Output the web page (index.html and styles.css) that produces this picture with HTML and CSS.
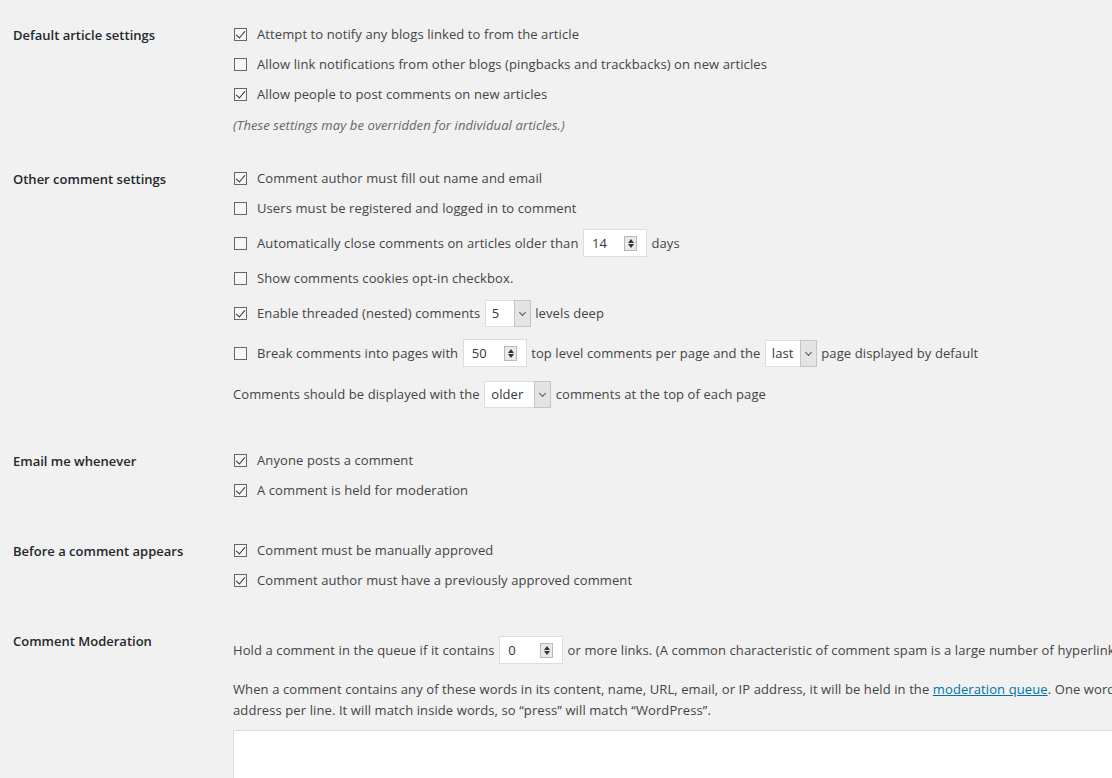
FILE: index.html
```html
<!DOCTYPE html>
<html lang="en">
<head>
  <meta charset="UTF-8">
  <title>Discussion Settings</title>
  <link rel="stylesheet" href="styles.css">
</head>
<body>
  <div class="wrap">
    <!-- Default article settings -->
    <div class="section">
      <div class="th">Default article settings</div>
      <div class="td">
        <div class="row"><span class="cb checked"></span>Attempt to notify any blogs linked to from the article</div>
        <div class="row"><span class="cb"></span>Allow link notifications from other blogs (pingbacks and trackbacks) on new articles</div>
        <div class="row"><span class="cb checked"></span>Allow people to post comments on new articles</div>
        <p class="description">(These settings may be overridden for individual articles.)</p>
      </div>
    </div>

    <!-- Other comment settings -->
    <div class="section">
      <div class="th">Other comment settings</div>
      <div class="td">
        <div class="row"><span class="cb checked"></span>Comment author must fill out name and email</div>
        <div class="row"><span class="cb"></span>Users must be registered and logged in to comment</div>
        <div class="row row-tall"><span class="cb"></span>Automatically close comments on articles older than <span class="num">14<i class="spin"></i></span> days</div>
        <div class="row"><span class="cb"></span>Show comments cookies opt-in checkbox.</div>
        <div class="row row-tall"><span class="cb checked"></span>Enable threaded (nested) comments <span class="select sel-5">5<i class="arrow"></i></span> levels deep</div>
        <div class="row row-tall"><span class="cb"></span>Break comments into pages with <span class="num">50<i class="spin"></i></span> top level comments per page and the <span class="select sel-last">last<i class="arrow"></i></span> page displayed by default</div>
        <div class="row row-last">Comments should be displayed with the <span class="select sel-older">older<i class="arrow"></i></span> comments at the top of each page</div>
      </div>
    </div>

    <!-- Email me whenever -->
    <div class="section">
      <div class="th">Email me whenever</div>
      <div class="td">
        <div class="row"><span class="cb checked"></span>Anyone posts a comment</div>
        <div class="row"><span class="cb checked"></span>A comment is held for moderation</div>
      </div>
    </div>

    <!-- Before a comment appears -->
    <div class="section">
      <div class="th">Before a comment appears</div>
      <div class="td">
        <div class="row"><span class="cb checked"></span>Comment must be manually approved</div>
        <div class="row"><span class="cb checked"></span>Comment author must have a previously approved comment</div>
      </div>
    </div>

    <!-- Comment Moderation -->
    <div class="section">
      <div class="th">Comment Moderation</div>
      <div class="td">
        <div class="row row-xl">Hold a comment in the queue if it contains <span class="num">0<i class="spin"></i></span> or more links. (A common characteristic of comment spam is a large number of hyperlinks.)</div>
        <p class="help">When a comment contains any of these words in its content, name, URL, email, or IP address, it will be held in the <a href="#">moderation queue</a>. One word or IP<br>address per line. It will match inside words, so &ldquo;press&rdquo; will match &ldquo;WordPress&rdquo;.</p>
        <div class="textarea"></div>
      </div>
    </div>
  </div>
</body>
</html>
```

FILE: styles.css
```css
* {
  box-sizing: border-box;
}
html, body {
  margin: 0;
  overflow: hidden;
}
body {
  background: #f1f1f1;
  color: #444;
  font-family: 'Open Sans', 'Noto Sans', sans-serif;
  font-size: 13px;
  letter-spacing: 0.1px;
  padding-top: 19px;
}
.wrap {
  width: 1500px;
}
.section {
  display: flex;
  padding-bottom: 30px;
}
.th {
  width: 233px;
  flex: none;
  padding-left: 13px;
  padding-top: 6px;
  line-height: 20px;
  font-weight: 600;
  font-size: 13px;
  letter-spacing: 0;
  color: #23282d;
}
.td {
  flex: 1;
  white-space: nowrap;
}
.row {
  display: flex;
  align-items: center;
  height: 30px;
  white-space: pre;
}
.row-tall { height: 40px; }
.row-last { height: 42px; }
.row-xl { height: 50px; }

/* checkboxes */
.cb {
  width: 13px;
  height: 13px;
  border: 1px solid #666;
  background: #f6f6f6;
  margin: 0 10px 0 1px;
  flex: none;
  position: relative;
}
.cb.checked::after {
  content: '';
  position: absolute;
  left: 3px;
  top: 0px;
  width: 4px;
  height: 8px;
  border: solid #333;
  border-width: 0 1px 1px 0;
  transform: rotate(40deg);
}

.description {
  margin: 6px 0 -2px;
  line-height: 20px;
  font-style: italic;
  color: #666;
}

/* number inputs */
.num {
  display: inline-flex;
  align-items: center;
  width: 64px;
  height: 28px;
  background: #fff;
  border: 1px solid #ddd;
  padding-left: 8px;
  margin: 0 1px;
  position: relative;
  color: #32373c;
}
.spin {
  position: absolute;
  right: 9px;
  top: 6px;
  width: 13px;
  height: 15px;
  border: 1px solid #b8b8b8;
  background: #e9e9e9;
}
.spin::before, .spin::after {
  content: '';
  position: absolute;
  left: 3px;
  border-left: 3px solid transparent;
  border-right: 3px solid transparent;
}
.spin::before {
  top: 2px;
  border-bottom: 4px solid #333;
}
.spin::after {
  bottom: 2px;
  border-top: 4px solid #333;
}

/* selects */
.select {
  display: inline-flex;
  align-items: center;
  height: 27px;
  background: #fff;
  border: 1px solid #ddd;
  padding-left: 6px;
  margin: 0 1px;
  position: relative;
  color: #32373c;
}
.sel-5 { width: 46px; }
.sel-last { width: 52px; }
.sel-older { width: 67px; }
.arrow {
  position: absolute;
  right: -1px;
  top: -1px;
  bottom: -1px;
  width: 17px;
  background: #e4e4e4;
  border: 1px solid #c4c4c4;
}
.arrow::after {
  content: '';
  position: absolute;
  left: 5px;
  top: 9px;
  width: 4px;
  height: 4px;
  border: solid #555;
  border-width: 0 1px 1px 0;
  transform: rotate(45deg);
}

.help {
  margin: 4px 0 0;
  line-height: 21px;
}
.help a {
  color: #0073aa;
}
.textarea {
  margin-top: 9px;
  height: 120px;
  background: #fff;
  border: 1px solid #ddd;
}
```
